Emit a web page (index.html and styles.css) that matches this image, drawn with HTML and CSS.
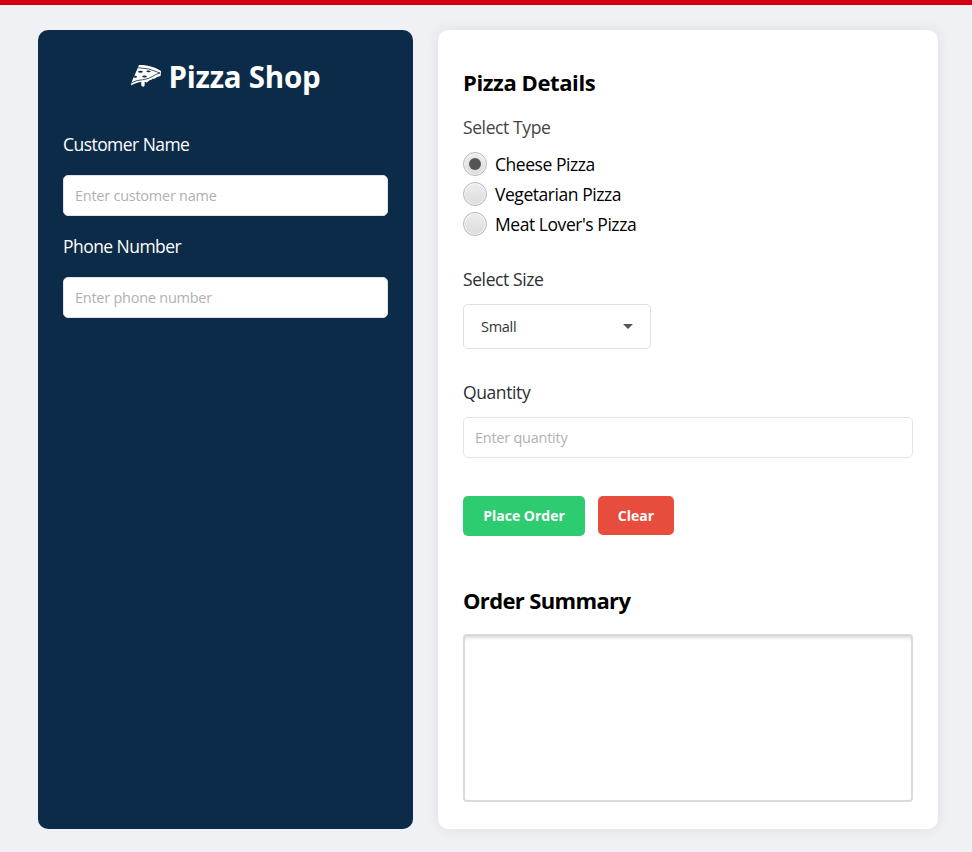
FILE: index.html
```html
<!DOCTYPE html>
<html lang="en">
<head>
<meta charset="utf-8">
<title>Pizza Shop</title>
<link rel="stylesheet" href="styles.css">
</head>
<body>
<main class="layout">
  <section class="customer">
    <h1 class="brand">
      <svg class="slice" viewBox="0 0 30 24" width="30" height="24">
        <path d="M8 1 C16 .6 24 3 30 7 L29.6 12 Q26 12.5 23 15 L22 14.5 L20 16 Q18.500 15.500 17 17.500 Q16 19 14.500 18 L13.800 17.500 L13.500 22 Q11.500 23.500 10.300 21.500 L10.300 18 Q6 18.200 0 21.500 L1 17 L5 8 Z" fill="#fff"/>
        <path d="M6.500 3.700 Q18 3.600 29 9 M1 18.600 Q6 15.800 11.500 15.800 Q18 14.800 21.500 12.400 Q25 10 29 9" fill="none" stroke="#0c2b49" stroke-width=".8"/>
        <g fill="#0c2b49"><ellipse cx="9.500" cy="7.800" rx="2.400" ry="1"/><ellipse cx="17.500" cy="7.300" rx="2.200" ry=".9"/><ellipse cx="13.500" cy="12.500" rx="2.400" ry="1.100"/><path d="M3.500 11.500l2.500 .8-.6 1.500-2.700-.3z"/></g>
      </svg>
      <span>Pizza Shop</span>
    </h1>
    <label class="label" for="name">Customer Name</label>
    <input class="field" id="name" type="text" placeholder="Enter customer name">
    <label class="label" for="phone">Phone Number</label>
    <input class="field" id="phone" type="text" placeholder="Enter phone number">
  </section>
  <section class="order">
    <h2 class="heading">Pizza Details</h2>
    <div class="label type-label">Select Type</div>
    <div class="radios">
      <label class="radio"><i class="dot on"></i><span>Cheese Pizza</span></label>
      <label class="radio"><i class="dot"></i><span>Vegetarian Pizza</span></label>
      <label class="radio"><i class="dot"></i><span>Meat Lover's Pizza</span></label>
    </div>
    <div class="label">Select Size</div>
    <div class="select"><span>Small</span><i class="arrow"></i></div>
    <label class="label" for="qty">Quantity</label>
    <input class="field" id="qty" type="text" placeholder="Enter quantity">
    <div class="actions">
      <button class="btn place">Place Order</button>
      <button class="btn clear">Clear</button>
    </div>
    <h2 class="heading summary-heading">Order Summary</h2>
    <div class="summary"></div>
  </section>
</main>
</body>
</html>
```
FILE: styles.css
```css
* { box-sizing: border-box; }
body {
  margin: 0;
  height: 852px;
  border-top: 5px solid #d4000f;
  background: #f0f1f5;
  font-family: "Open Sans", "Noto Sans", sans-serif;
  overflow: hidden;
}
.layout {
  display: grid;
  grid-template-columns: 375px 500px;
  gap: 25px;
  height: 799px;
  margin: 25px 0 0 38px;
}
.customer, .order {
  display: flex;
  flex-direction: column;
  padding: 25px;
  border-radius: 10px;
}
.customer { padding-top: 27px; background: #0c2b49; color: #fff; }
.order {
  padding-top: 38px;
  background: #fff;
  box-shadow: 0 0 13px rgba(0, 0, 0, .09);
}
.brand {
  display: flex;
  justify-content: center;
  align-items: center;
  gap: 8px;
  height: 40px;
  margin: 0 0 35px;
  font-size: 29.5px;
  line-height: 40px;
  letter-spacing: -.25px;
}
.slice { margin-top: -2px; }
.label {
  flex: none;
  height: 24px;
  font-size: 17.5px;
  line-height: 24px;
  letter-spacing: -.4px;
  white-space: nowrap;
}
.customer .label { letter-spacing: -.55px; }
.order .label { color: #2c2f33; }
.order .type-label { margin-top: 17px; color: #444; }
.field {
  flex: none;
  width: 100%;
  height: 41px;
  padding: 0 11px;
  border: 1.5px solid #e2e3e5;
  border-radius: 5px;
  background: #fff;
  font: 14.5px "Open Sans", "Noto Sans", sans-serif;
  letter-spacing: -.25px;
}
.field::placeholder { color: #b1b1b1; opacity: 1; }
.customer .field { margin: 19px 0 18px; }
.heading {
  height: 30px;
  margin: 0;
  color: #000;
  font-size: 22px;
  line-height: 28px;
  letter-spacing: -.4px;
}
.radios { margin: 10px 0 28px; }
.radio {
  display: flex;
  align-items: center;
  gap: 8px;
  height: 30px;
  color: #000;
  font-size: 17.5px;
  letter-spacing: -.45px;
}
.dot {
  display: grid;
  place-items: center;
  width: 24px;
  height: 24px;
  border: 1.5px solid #b8b8b8;
  border-radius: 50%;
  background: linear-gradient(#ededed, #dcdcdc);
  box-shadow: inset 0 0 0 1px rgba(255, 255, 255, .6);
}
.on::after {
  content: "";
  width: 12px;
  height: 12px;
  border-radius: 50%;
  background: #555;
}
.select {
  display: flex;
  flex: none;
  align-items: center;
  justify-content: space-between;
  width: 188px;
  height: 45px;
  margin: 13px 0 31px;
  padding: 0 17px;
  border: 1.5px solid #e0e0e0;
  border-radius: 5px;
  color: #333;
  font-size: 14.5px;
  letter-spacing: -.3px;
}
.arrow {
  border: 5px solid transparent;
  border-top-color: #555;
  border-bottom: 0;
}
.order .field { margin-top: 13px; }
.actions {
  display: flex;
  gap: 13px;
  margin-top: 38px;
}
.btn {
  height: 40px;
  padding: 0 0 2px;
  border: 0;
  border-radius: 5px;
  color: #fff;
  font: bold 14px "Open Sans", "Noto Sans", sans-serif;
  letter-spacing: 0;
}
.place { width: 122px; background: #2ecc71; }
.clear { width: 76px; height: 39px; padding-bottom: 1px; background: #e74c3c; }
.summary-heading { margin-top: 50px; letter-spacing: -.65px; }
.summary {
  height: 168px;
  margin-top: 18px;
  border: 2px solid #dadada;
  border-radius: 4px;
  box-shadow: inset 0 4px 4px -3px rgba(0, 0, 0, .2);
}
```
